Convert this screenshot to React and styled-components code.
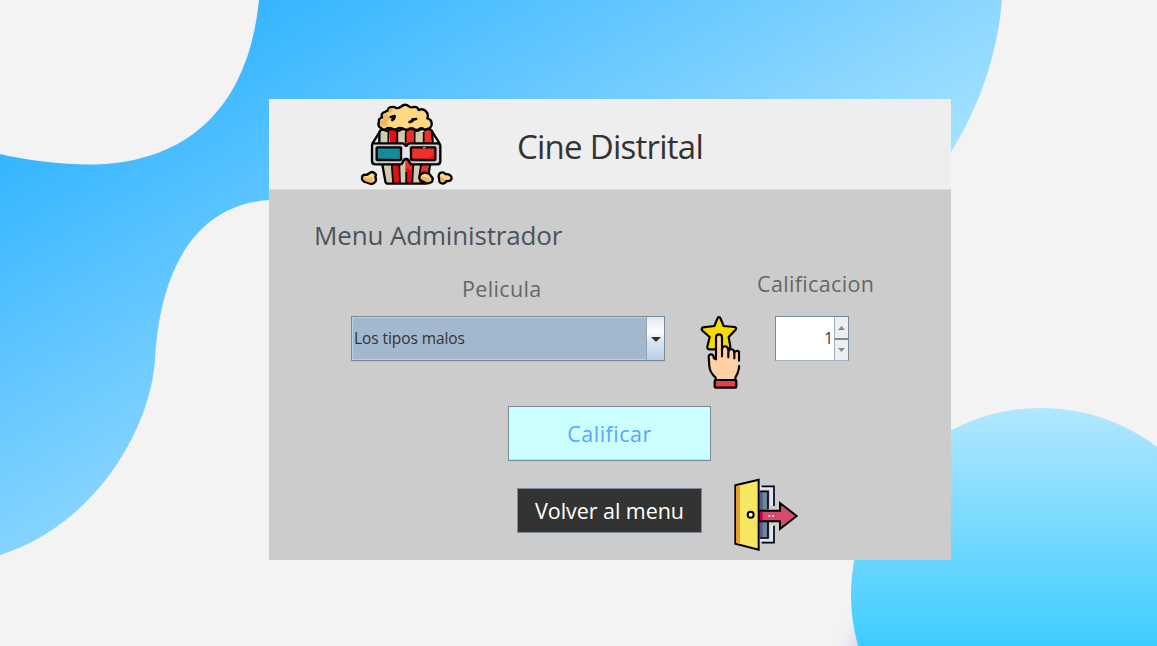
import React, { useState } from "react";
import styled, { createGlobalStyle } from "styled-components";

const GlobalStyle = createGlobalStyle`
  *, *::before, *::after { box-sizing: border-box; }
  body { margin: 0; overflow: hidden; background: #f3f3f3; }
`;

const Page = styled.main`
  position: relative;
  width: 1157px;
  height: 646px;
  padding: 99px 0 0 269px;
  overflow: hidden;
  background: #f3f3f3;
  font-family: "Open Sans", "Noto Sans", sans-serif;
`;

const Backdrop = styled.svg`
  position: absolute;
  inset: 0;
`;

const Card = styled.section`
  position: relative;
  width: 682px;
  height: 461px;
  background: #cccccc;
`;

const Header = styled.header`
  display: flex;
  align-items: flex-start;
  gap: 64px;
  height: 91px;
  padding: 4px 0 0 91px;
  background: #eeeeee;
  border-bottom: 1px solid #dadada;
`;

const Title = styled.h1`
  margin: 21px 0 0;
  font-size: 33px;
  line-height: 46px;
  font-weight: 400;
  letter-spacing: -0.75px;
  color: #333;
  white-space: nowrap;
`;

const Heading = styled.h2`
  margin: 0;
  padding: 27px 0 0 45px;
  font-size: 26px;
  line-height: 36px;
  font-weight: 450;
  letter-spacing: -0.15px;
  color: #4b535b;
`;

const Fields = styled.div`
  display: flex;
  align-items: flex-start;
  height: 153px;
  padding: 13px 0 0 82px;
`;

const Field = styled.div`
  display: flex;
  flex-direction: column;
  align-items: flex-start;
  width: ${(p) => p.$width}px;
  padding-top: ${(p) => p.$top}px;
  gap: ${(p) => p.$gap}px;
`;

const Label = styled.label`
  margin-left: ${(p) => p.$indent}px;
  font-size: 21.5px;
  line-height: 28px;
  font-weight: 450;
  letter-spacing: 0.35px;
  color: #666;
  white-space: nowrap;
`;

const StarSlot = styled.div`
  padding: 49px 33px 0 35px;
`;

const Combo = styled.div`
  display: flex;
  width: 314px;
  height: 45px;
  border: 1px solid #7a8a99;
  background: #a3b8cf;
  box-shadow: inset 1px 1px #b8cfe5, inset 0 -1px #b8cfe5, 0 1px #c4c4c4;
`;

const ComboValue = styled.span`
  flex: 1;
  padding-left: 2px;
  font-size: 15.5px;
  line-height: 43px;
  font-weight: 500;
  letter-spacing: -0.08px;
  color: #333;
`;

const ComboArrow = styled.button`
  display: grid;
  place-items: center;
  width: 18px;
  padding: 2px 0 0;
  border: 0;
  border-left: 1px solid #8fa2b8;
  background: linear-gradient(#dde8f3 0, #ffffff 35%, #dce8f3 55%, #b8cfe5 100%);
`;

const Spinner = styled.div`
  display: flex;
  width: 74px;
  height: 45px;
  border: 1px solid #7a8a99;
  border-bottom-color: #a3b3c2;
  background: #fff;
`;

const SpinnerValue = styled.span`
  flex: 1;
  padding-right: 1px;
  text-align: right;
  font-size: 15.5px;
  line-height: 43px;
  font-weight: 500;
  color: #333;
`;

const SpinnerSteps = styled.div`
  display: grid;
  grid-template-rows: 21px 22px;
  width: 14px;
  border-left: 1px solid #9fb0c0;
`;

const Step = styled.button`
  display: grid;
  place-items: center;
  padding: 0;
  border: 0;
  background: #eeeeee;
  & + & { border-top: 2px solid #7a8a99; }
`;

const Action = styled.button`
  width: ${(p) => p.$width}px;
  height: ${(p) => p.$height}px;
  padding: 0;
  border: 1px solid #7a8a99;
  font-family: inherit;
  font-size: 21.5px;
  line-height: 30px;
  font-weight: 450;
  letter-spacing: ${(p) => p.$spacing || 0}px;
  white-space: nowrap;
`;

const RateAction = styled(Action)`
  color: #5ba5fb;
  background: #ccffff;
  box-shadow: inset 0 -1px #b5e3ea;
`;

const BackAction = styled(Action)`
  margin-top: 11px;
  color: #fff;
  background: #333;
`;

const RateRow = styled.div`
  display: flex;
  padding-left: 239px;
`;

const BackRow = styled.div`
  display: flex;
  align-items: flex-start;
  gap: 31px;
  padding: 16px 0 0 248px;
`;

const Icon = styled.svg`
  display: block;
  flex: none;
`;

function Scenery() {
  return (
    <Backdrop width="1157" height="646" viewBox="0 0 1157 646" aria-hidden="true">
      <defs>
        <linearGradient id="wave" gradientUnits="userSpaceOnUse" x1="68" y1="114" x2="334" y2="557">
          <stop offset="0" stopColor="#34b5ff" />
          <stop offset="0.66" stopColor="#84d3ff" />
          <stop offset="1" stopColor="#a9e5ff" />
        </linearGradient>
        <linearGradient id="ball" gradientUnits="userSpaceOnUse" x1="0" y1="408" x2="0" y2="646">
          <stop offset="0" stopColor="#b2e7ff" />
          <stop offset="1" stopColor="#3ecdff" />
        </linearGradient>
        <filter id="soft" x="-20%" y="-20%" width="140%" height="140%">
          <feGaussianBlur stdDeviation="9" />
        </filter>
      </defs>
      <path
        fill="url(#wave)"
        d="M259 0C248 110 185 164 89 164.500C55 164 25 160 0 154V555C95 525 150 430 155 360C160 270 195 205 269 200H915L951 152C980 105 997 55 1002 0Z"
      />
      <ellipse cx="1041" cy="660" rx="190" ry="100" fill="#9a8fe8" opacity="0.4" filter="url(#soft)" />
      <ellipse cx="1041" cy="595" rx="190" ry="187" fill="url(#ball)" />
    </Backdrop>
  );
}

function Kernel({ d, shade }) {
  return (
    <g>
      <path d={d} fill="#ffd582" stroke="#000" strokeWidth="7" strokeLinejoin="round" />
      <path d={shade} fill="#eeb25a" />
    </g>
  );
}

function PopcornIcon() {
  return (
    <Icon width="93" height="84" viewBox="30 21 279 252" aria-hidden="true">
      <path d="M90 106L67 143M246 106L269 143" stroke="#000" strokeWidth="7" />
      <path d="M88 106L107 263H231L249 106Z" fill="#d0cbae" />
      <path d="M117 102H142L150 263H129ZM167 102H193L186 263H166ZM222 102H246L228 263H207Z" fill="#e3100f" />
      <path d="M168 102H193L187 225L168 215ZM222 102H246L232 225H214Z" fill="#ef3028" />
      <path d="M96 200L106 256Q107 263 114 263H224Q231 263 232 256L241 200" fill="none" stroke="#000" strokeWidth="7" />
      <path d="M125 205L129 260M148 205L150 260M169 228V260M190 205L187 260M213 205L208 240" stroke="#000" strokeWidth="5" />
      <path
        d="M88 140V109Q92 98 103 102Q111 107 116 103Q125 94 138 102Q145 107 151 102Q161 95 170 104Q182 94 194 103Q202 106 208 102Q217 96 225 102Q238 95 246 105L248 140"
        fill="none" stroke="#000" strokeWidth="7"
      />
      <path d="M115 108V140M142 108V140M167 108V140M194 108V140M221 108V140" stroke="#000" strokeWidth="5" />
      <g transform="translate(84 0) scale(1.02 1) translate(-83 0)">
        <path
          d="M94 98Q80 91 86 77Q84 67 95 65Q90 51 104 48Q108 43 112 45Q112 33 126 33Q133 32 136 36Q146 37 151 32Q162 21 174 31Q180 36 187 33Q199 31 203 42Q216 36 224 46Q233 55 228 67Q241 70 241 84Q240 96 230 98Q225 102 218 99Q208 94 202 101Q194 104 187 98Q178 94 171 101Q162 102 157 98Q146 93 139 99Q128 102 123 97Q113 94 107 99Q99 103 94 98Z"
          fill="#ffd982" stroke="#000" strokeWidth="7" strokeLinejoin="round"
        />
        <path d="M92 90Q85 82 94 72Q101 70 99 60Q97 51 107 51L121 66Q108 74 111 87Q102 96 92 90ZM115 39Q124 35 130 39L121 51L113 50Z" fill="#efb75f" />
        <path d="M121 63L132 60M131 60Q133 67 125 72M176 78L184 75M184 71L195 69" fill="none" stroke="#000" strokeWidth="8" strokeLinecap="round" />
      </g>
      <path d="M71 142H158Q162 142 164 146H173Q176 142 180 142H263Q271 142 271 150V196Q271 205 262 205H187Q181 205 179 199Q174 188 168 189Q161 189 158 199Q156 205 150 205H76Q66 205 66 196V148Q66 142 71 142Z" fill="#cfcdd0" stroke="#000" strokeWidth="7" />
      <path d="M162 146Q168 153 175 146L181 184H156Z" fill="#e5e5e7" />
      <path d="M163 148L168 151L174 148" fill="none" stroke="#000" strokeWidth="5" />
      <rect x="80" y="154" width="73" height="38" rx="2" fill="#158c9c" stroke="#000" strokeWidth="7" />
      <rect x="183" y="154" width="73" height="38" rx="2" fill="#f03029" stroke="#000" strokeWidth="7" />
      <path d="M114 189Q145 187 150 165V189Z" fill="#1a7f91" />
      <path d="M225 189Q247 184 253 165V189Z" fill="#e01b1b" />
      <path d="M219 155H227" stroke="#f77" strokeWidth="4" />
      <Kernel
        d="M44 236Q51 238 57 232Q67 224 74 232Q80 236 76 243Q81 252 74 259Q65 267 56 261Q50 260 44 258Q35 253 36 246Q36 238 44 236Z"
        shade="M40 247Q43 242 48 245Q56 250 66 244Q71 253 63 260Q54 260 47 255Q40 253 40 247Z"
      />
      <Kernel
        d="M216 233Q224 227 232 232Q238 230 241 238L248 247Q249 258 240 260Q233 265 225 259L213 254Q204 245 210 239Q212 234 216 233Z"
        shade="M213 243Q217 239 222 244Q234 243 240 251Q238 260 229 257L216 251Z"
      />
      <Kernel
        d="M270 231Q280 226 286 234Q296 234 302 239Q307 245 303 252Q296 257 289 255Q285 264 275 262Q266 260 268 249Q263 238 270 231Z"
        shade="M269 240Q275 241 279 246Q285 250 285 254Q278 262 272 257Q272 249 269 240Z"
      />
    </Icon>
  );
}

function StarIcon() {
  return (
    <Icon width="42" height="75" viewBox="30 21 126 225" aria-hidden="true">
      <path
        d="M83 30Q87 24 91 30L101 54L134 57Q141 59 137 65L116 87L121 116L119 124L58 124Q51 124 52 116L59 87L37 68Q32 61 39 58L73 54Z"
        fill="#f5db00" stroke="#000" strokeWidth="6.500" strokeLinejoin="round"
      />
      <path
        d="M78 154V87Q79 79 87 79Q95 79 96 87V121Q98 113 106 115Q114 115 115 124V128Q118 121 126 123Q133 126 132 134Q139 126 146 130Q149 132 148 138V181Q143 198 136 210V215H77V209Q59 193 58 174L56 145Q57 138 63 138Q71 138 72 149Z"
        fill="#ffd0a2"
      />
      <path
        d="M77 215V209Q59 193 58 174L56 146Q57 138 64 139Q71 140 72 151L78 154V87Q79 79 87 79Q95 79 96 87V145M96 124Q98 113 106 115Q115 116 115 128V148M115 130Q119 122 126 124Q134 127 133 137V151M133 133Q140 126 147 130V158M147 174V181Q144 196 136 209V215"
        fill="none" stroke="#000" strokeWidth="6.500" strokeLinecap="round" strokeLinejoin="round"
      />
      <rect x="74" y="216" width="65" height="23" rx="3" fill="#e63f46" stroke="#000" strokeWidth="6.500" />
    </Icon>
  );
}

function DoorIcon() {
  return (
    <Icon width="66" height="75" viewBox="24 21 198 225" aria-hidden="true">
      <path d="M103 55H140V108M103 210H140V164" fill="none" stroke="#dbe6fb" strokeWidth="9" />
      <path d="M104 63H128V206H104Z" fill="#71839e" />
      <path d="M104 63H113V206H104Z" fill="#50617b" />
      <path d="M110 49H147V108M106 64H129V118M147 167V218H110M129 156V204H106" fill="none" stroke="#000" strokeWidth="5" />
      <path d="M106 122H165V99L215 138L165 177V154H106Z" fill="#d64b6c" stroke="#000" strokeWidth="6" />
      <path d="M105 125H113V151H105Z" fill="#c70045" />
      <path d="M130 138H136M141 138H147" stroke="#fff" strokeWidth="5" />
      <path d="M31 46L101 29V239L31 221Z" fill="#f8e663" stroke="#000" strokeWidth="6" />
      <path d="M34 48L45 46V222L34 219Z" fill="#f39c25" />
      <circle cx="77" cy="134" r="9" fill="#fff" stroke="#000" strokeWidth="6" />
    </Icon>
  );
}

function Triangle({ width, height, color, up }) {
  return (
    <Icon width={width} height={height} viewBox="0 0 10 5" preserveAspectRatio="none" aria-hidden="true">
      <path d={up ? "M0 5L5 0L10 5Z" : "M0 0L5 5L10 0Z"} fill={color} />
    </Icon>
  );
}

export default function App() {
  const [rating, setRating] = useState(1);
  return (
    <>
      <GlobalStyle />
      <Page>
        <Scenery />
        <Card>
          <Header>
            <PopcornIcon />
            <Title>Cine Distrital</Title>
          </Header>
          <Heading>Menu Administrador</Heading>
          <Fields>
            <Field $width={314} $top={9} $gap={13}>
              <Label $indent={111}>Pelicula</Label>
              <Combo>
                <ComboValue>Los tipos malos</ComboValue>
                <ComboArrow aria-label="Abrir lista">
                  <Triangle width={10} height={5} color="#333" />
                </ComboArrow>
              </Combo>
            </Field>
            <StarSlot>
              <StarIcon />
            </StarSlot>
            <Field $width={120} $top={4} $gap={18}>
              <Label $indent={-18}>Calificacion</Label>
              <Spinner>
                <SpinnerValue>{rating}</SpinnerValue>
                <SpinnerSteps>
                  <Step aria-label="Subir" onClick={() => setRating(rating + 1)}>
                    <Triangle width={7} height={4} color="#7a8a99" up />
                  </Step>
                  <Step aria-label="Bajar" onClick={() => setRating(rating - 1)}>
                    <Triangle width={7} height={4} color="#7a8a99" />
                  </Step>
                </SpinnerSteps>
              </Spinner>
            </Field>
          </Fields>
          <RateRow>
            <RateAction $width={203} $height={55} $spacing={0.5}>Calificar</RateAction>
          </RateRow>
          <BackRow>
            <BackAction $width={185} $height={45} $spacing={-0.05}>Volver al menu</BackAction>
            <DoorIcon />
          </BackRow>
        </Card>
      </Page>
    </>
  );
}
